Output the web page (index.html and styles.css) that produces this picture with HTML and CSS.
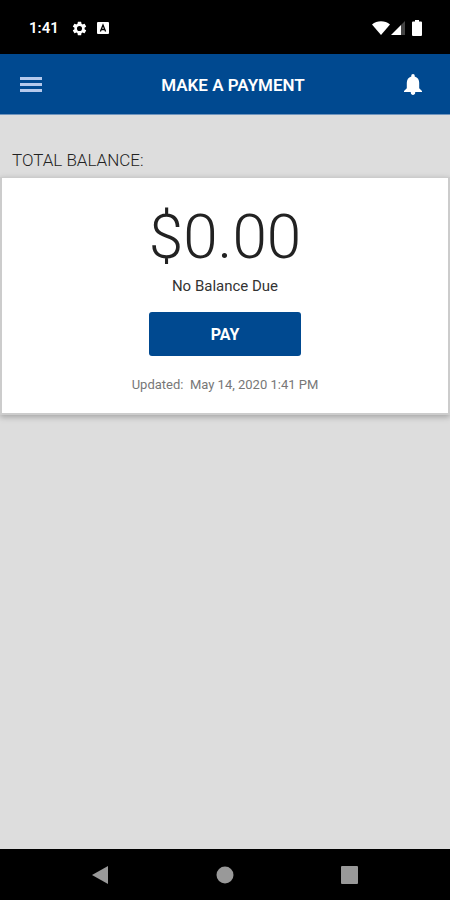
FILE: index.html
```html
<!DOCTYPE html>
<html lang="en">
<head>
<meta charset="utf-8">
<meta name="viewport" content="width=device-width, initial-scale=1">
<title>Make a Payment</title>
<link rel="stylesheet" href="styles.css">
</head>
<body>
<div class="status">
  <span class="clock">1:41</span>
  <svg class="gear" width="17" height="17" viewBox="0 0 24 24" aria-hidden="true"><path fill="#fff" d="M19.14 12.94c.04-.3.06-.61.06-.94 0-.32-.02-.64-.07-.94l2.03-1.58a.49.49 0 0 0 .12-.61l-1.92-3.32a.49.49 0 0 0-.59-.22l-2.39.96a7 7 0 0 0-1.62-.94l-.36-2.54a.48.48 0 0 0-.48-.41h-3.84a.47.47 0 0 0-.47.41l-.36 2.54c-.59.24-1.13.57-1.62.94l-2.39-.96a.48.48 0 0 0-.59.22L2.74 8.87a.47.47 0 0 0 .12.61l2.03 1.58c-.05.3-.09.63-.09.94s.02.64.07.94l-2.03 1.58a.49.49 0 0 0-.12.61l1.92 3.32c.12.22.37.29.59.22l2.39-.96c.5.38 1.03.7 1.62.94l.36 2.54c.05.24.24.41.48.41h3.84c.24 0 .44-.17.47-.41l.36-2.54a6.8 6.8 0 0 0 1.62-.94l2.39.96c.22.08.47 0 .59-.22l1.92-3.32a.47.47 0 0 0-.12-.61zM12 15.600a3.600 3.600 0 1 1 0-7.200 3.600 3.600 0 0 1 0 7.200z"/></svg>
  <svg class="keyboard" width="12" height="12" viewBox="0 0 12 12" aria-hidden="true"><rect width="12" height="12" rx="1" fill="#fff"/><path d="M3.400 9.500 6 3l2.600 6.500M4.500 7.500h3" fill="none" stroke="#000" stroke-width="1.300"/></svg>
  <svg class="wifi" width="18" height="14" viewBox="0 0 18 14" aria-hidden="true"><path fill="#fff" d="M0 3.500C5-.8 13-.8 18 3.500L9 14z"/></svg>
  <svg class="signal" width="14" height="14" viewBox="0 0 14 14" aria-hidden="true"><path fill="#444" d="M14 0v14H10V4z"/><path fill="#fff" d="M0 14 10 4v10z"/></svg>
  <svg class="battery" width="10" height="16" viewBox="0 0 10 16" aria-hidden="true"><path fill="#fff" d="M3 0h4v1.500h2a1 1 0 0 1 1 1V15a1 1 0 0 1-1 1H1a1 1 0 0 1-1-1V2.500a1 1 0 0 1 1-1h2z"/></svg>
</div>
<header class="bar">
  <button class="icon-button" aria-label="Menu"><svg width="22" height="16" viewBox="0 0 22 16"><path fill="#b5c9ec" d="M0 0h22v3H0zM0 6h22v3H0zM0 12h22v3H0z"/></svg></button>
  <h1>MAKE A PAYMENT</h1>
  <button class="icon-button" aria-label="Notifications"><svg width="18" height="22" viewBox="0 0 18 22"><path fill="#fff" d="M9 0c1.100 0 1.700.8 1.700 1.700v.7c3 .8 4.500 3.300 4.500 6.300v5.500L18 17v1H0v-1l2.800-2.800V8.700c0-3 1.500-5.500 4.500-6.300v-.7C7.300.8 7.900 0 9 0zM6.800 18h4.400v.8c0 1.300-1 2.200-2.200 2.200s-2.200-.9-2.200-2.200z"/></svg></button>
</header>
<main>
  <h2>TOTAL BALANCE:</h2>
  <section class="card">
    <p class="amount">$0.00</p>
    <p class="due">No Balance Due</p>
    <button class="pay">PAY</button>
    <p class="updated">Updated:&nbsp; May 14, 2020 1:41 PM</p>
  </section>
</main>
<nav class="system">
  <button aria-label="Back"><svg width="18" height="18" viewBox="0 0 18 18"><path fill="#999" d="M1 9 17 0v18z"/></svg></button>
  <button aria-label="Home"><svg width="18" height="18" viewBox="0 0 18 18"><circle cx="9" cy="9" r="8.500" fill="#999"/></svg></button>
  <button aria-label="Recent apps"><svg width="18" height="18" viewBox="0 0 18 18"><rect width="17" height="18" rx="1" fill="#999"/></svg></button>
</nav>
</body>
</html>
```
FILE: styles.css
```css
* {
  box-sizing: border-box;
}

body {
  margin: 0;
  min-height: 100vh;
  display: flex;
  flex-direction: column;
  background: #ddd;
  color: #222;
  font-family: Roboto, "Liberation Sans", sans-serif;
}

h1, h2, p {
  margin: 0;
}

button {
  border: 0;
  padding: 0;
  background: none;
  font-family: inherit;
  cursor: pointer;
}

svg {
  display: block;
}

.status {
  height: 54px;
  padding: 2px 28px 0 29px;
  display: flex;
  align-items: center;
  background: #000;
  color: #fff;
}

.clock {
  font-size: 15px;
  font-weight: 600;
}

.gear {
  margin-left: 12px;
}

.keyboard {
  margin-left: 9px;
}

.wifi {
  margin-left: auto;
}

.signal {
  margin-left: 1px;
}

.battery {
  margin-left: 7px;
}

.bar {
  height: 61px;
  padding: 2px 21px 0 15px;
  display: flex;
  align-items: center;
  background: #004990;
  border-bottom: 1px solid #6f94bd;
  color: #fff;
}

.bar h1 {
  flex: 1;
  padding-left: 22px;
  font-size: 17px;
  font-weight: 600;
  line-height: 24px;
  text-align: center;
}

.icon-button {
  width: 32px;
  height: 40px;
  display: grid;
  place-items: center;
}

main {
  flex: 1;
}

h2 {
  padding: 33px 12px 5px;
  font-size: 17px;
  font-weight: 300;
  line-height: 24px;
}

.card {
  padding: 24px 0 18px;
  display: flex;
  flex-direction: column;
  align-items: center;
  background: #fff;
  border: 2px solid #ccc;
  border-top-width: 1px;
  box-shadow: 0 2px 6px #0004;
}

.amount {
  font-size: 62px;
  font-weight: 300;
  line-height: 70px;
}

.due {
  margin-top: 4px;
  color: #333;
  font-size: 15px;
  line-height: 20px;
}

.pay {
  width: 152px;
  height: 44px;
  margin-top: 16px;
  padding-top: 2px;
  border-radius: 3px;
  background: #004990;
  color: #fff;
  font-size: 16px;
  font-weight: 700;
  line-height: 20px;
}

.updated {
  margin-top: 19px;
  color: #777;
  font-size: 13px;
  line-height: 20px;
}

.system {
  height: 51px;
  padding: 0 37px;
  display: flex;
  align-items: center;
  background: #000;
}

.system button {
  flex: 1;
  height: 48px;
  display: grid;
  place-items: center;
}
```
